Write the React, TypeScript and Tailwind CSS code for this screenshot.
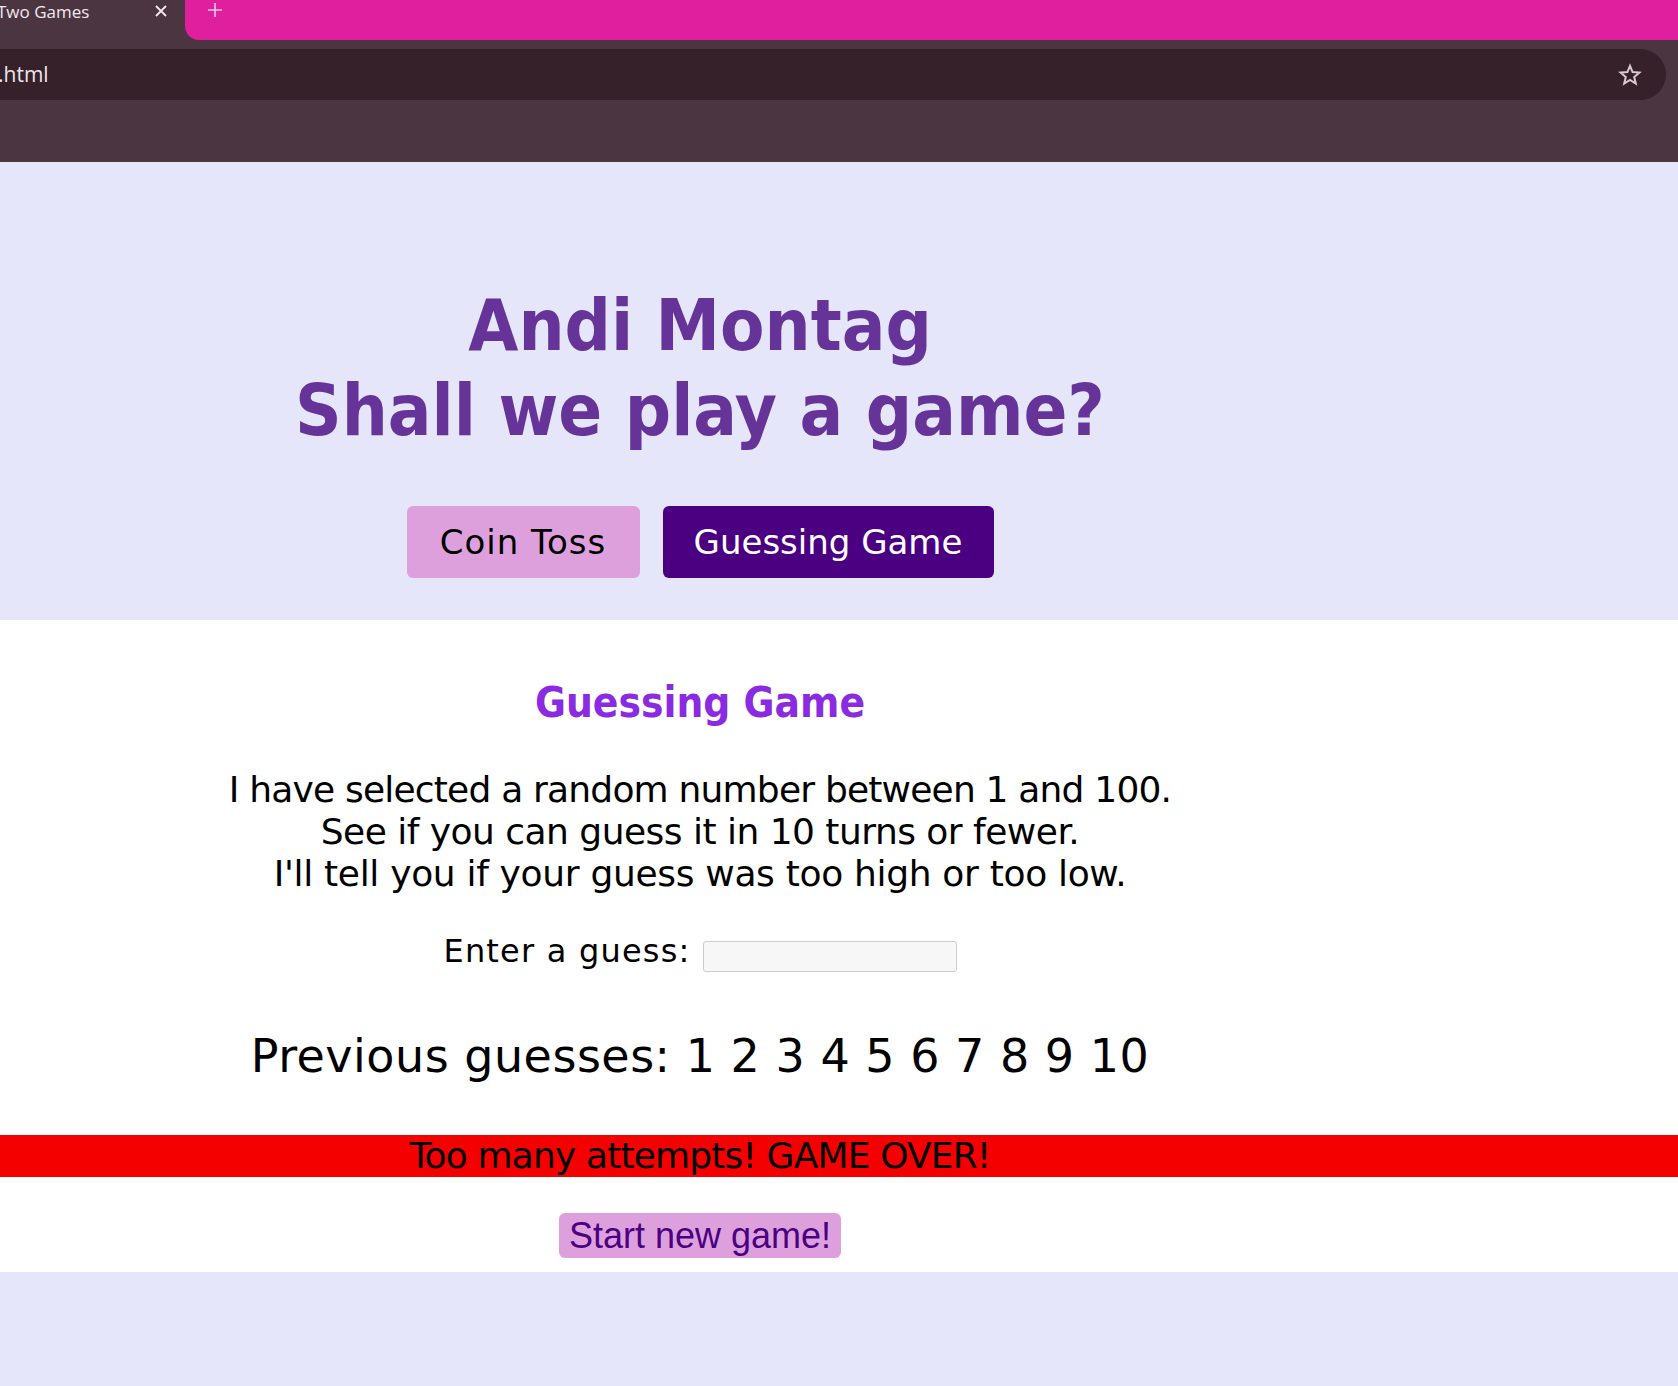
import React from "react";

const F = { fontFamily: '"DejaVu Sans", "Liberation Sans", sans-serif' };
const FC = { fontFamily: '"DejaVu Sans Condensed", "DejaVu Sans", sans-serif', fontStretch: "condensed" as const };

function Star() {
  return (
    <svg width="24" height="24" viewBox="0 0 24 24" fill="none" stroke="#d9c9d1" strokeWidth="2" strokeLinejoin="miter">
      <path d="M12 2.8l2.6 6.3 6.8.5-5.2 4.4 1.6 6.6L12 17l-5.8 3.6 1.6-6.6-5.2-4.4 6.8-.5z" />
    </svg>
  );
}

function Plus() {
  return (
    <svg width="16" height="16" viewBox="0 0 16 16" stroke="#f4c6e2" strokeWidth="1.6">
      <path d="M8 1v14M1 8h14" />
    </svg>
  );
}

function Close() {
  return (
    <svg width="12" height="12" viewBox="0 0 12 12" stroke="#f3e9ee" strokeWidth="1.8">
      <path d="M1 1l10 10M11 1L1 11" />
    </svg>
  );
}

export default function App() {
  return (
    <div className="w-[1678px] min-h-[1386px] bg-[#e6e6fa]" style={F}>
      {/* Browser chrome */}
      <div className="h-[162px] bg-[#4a3540] flex flex-col">
        <div className="h-[40px] flex">
          <div className="w-[185px] relative text-[#f3e9ee]">
            <span className="absolute left-[-3px] top-[1px] text-[17px] font-medium leading-[22px]" style={{ fontFamily: '"Open Sans", sans-serif' }}>
              Two Games
            </span>
            <span className="absolute left-[155px] top-[5px]">
              <Close />
            </span>
          </div>
          <div className="flex-1 bg-[#e01f9e] rounded-bl-[14px] relative">
            <span className="absolute left-[22px] top-[2px]">
              <Plus />
            </span>
          </div>
        </div>
        <div className="mt-[9px] h-[51px] w-[1666px] bg-[#36212a] rounded-r-full flex items-center justify-between pr-[24px]">
          <span className="text-[21px] text-[#efe4ea] -ml-[2px]" style={{ fontFamily: '"Open Sans", sans-serif' }}>.html</span>
          <Star />
        </div>
      </div>

      {/* Header */}
      <div className="bg-[#e6e6fa] pt-[121px] pb-[42px]">
        <div className="w-[1400px] text-center">
          <h1 className="text-[72px] leading-[85px] font-bold text-[#663399]" style={FC}>
            Andi Montag
            <br />
            Shall we play a game?
          </h1>
          <div className="mt-[53px] flex justify-center gap-[23px]">
            <button className="h-[72px] w-[233px] rounded-[6px] bg-[#dda0dd] text-black text-[34px] tracking-[1px]">Coin Toss</button>
            <button className="h-[72px] w-[331px] rounded-[6px] bg-[#4b0082] text-white text-[34px]">Guessing Game</button>
          </div>
        </div>
      </div>

      {/* Game */}
      <div className="bg-white pt-[58px] pb-[14px]">
        <div className="w-[1400px] text-center">
          <h2 className="text-[42px] leading-[50px] font-bold text-[#8a2be2]" style={FC}>Guessing Game</h2>
          <p className="mt-[41px] text-[36px] leading-[42px] text-black">
            <span className="tracking-[-0.8px]">I have selected a random number between 1 and 100.</span>
            <br />
            <span className="tracking-[-0.52px]">See if you can guess it in 10 turns or fewer.</span>
            <br />
            <span className="tracking-[-0.32px]">I'll tell you if your guess was too high or too low.</span>
          </p>
          <div className="mt-[36px] h-[41px] flex justify-center items-start">
            <span className="text-[32px] leading-[40px] text-black tracking-[1.2px]">Enter a guess:</span>
            <input className="ml-[12px] mt-[10px] w-[254px] h-[31px] bg-[#f7f7f7] border border-[#cccccc] rounded-[3px]" type="text" />
          </div>
          <div className="mt-[57px] text-[46px] leading-[54px] text-black tracking-[0.5px]">Previous guesses: 1 2 3 4 5 6 7 8 9 10</div>
        </div>
        <div className="mt-[52px] bg-[#f50000]">
          <div className="w-[1400px] text-center text-[36px] leading-[42px] text-black tracking-[-0.85px]">Too many attempts! GAME OVER!</div>
        </div>
        <div className="w-[1400px] flex justify-center mt-[36px]">
          <button
            className="h-[45px] px-[10px] rounded-[6px] bg-[#dda0dd] text-[#4b0082] text-[36px] leading-[41px]"
            style={{ fontFamily: '"Liberation Sans", Arial, sans-serif' }}
          >
            Start new game!
          </button>
        </div>
      </div>
      <div className="h-[113px] bg-[#e6e6fa]" />
    </div>
  );
}
